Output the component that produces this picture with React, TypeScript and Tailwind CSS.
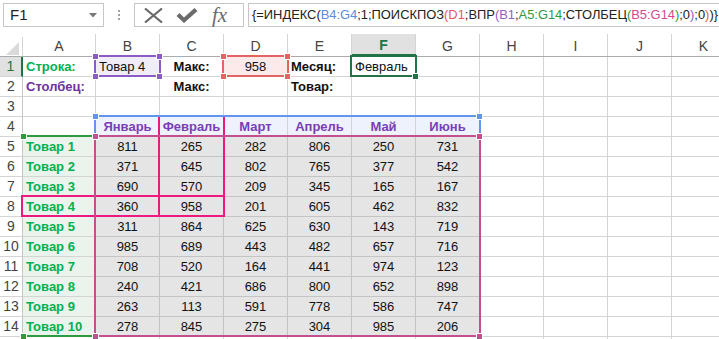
import React from "react"
import clsx from "clsx"
import { twMerge } from "tailwind-merge"

// ширины колонок листа: A, B..K
const colW = ["w-[73px]", "w-[64px]", "w-[64px]", "w-[64px]", "w-[64px]", "w-[64px]", "w-[64px]", "w-[64px]", "w-[64px]", "w-[64px]", "w-[64px]"]
const letters = ["A", "B", "C", "D", "E", "F", "G", "H", "I", "J", "K"]
const months = ["Январь", "Февраль", "Март", "Апрель", "Май", "Июнь"]

const data: [string, number[]][] = [
    ["Товар 1", [811, 265, 282, 806, 250, 731]],
    ["Товар 2", [371, 645, 802, 765, 377, 542]],
    ["Товар 3", [690, 570, 209, 345, 165, 167]],
    ["Товар 4", [360, 958, 201, 605, 462, 832]],
    ["Товар 5", [311, 864, 625, 630, 143, 719]],
    ["Товар 6", [985, 689, 443, 482, 657, 716]],
    ["Товар 7", [708, 520, 164, 441, 974, 123]],
    ["Товар 8", [240, 421, 686, 800, 652, 898]],
    ["Товар 9", [263, 113, 591, 778, 586, 747]],
    ["Товар 10", [278, 845, 275, 304, 985, 206]],
]

type CellSpec = { text?: string; cls?: string }

const Cell = ({ col, spec }: { col: number; spec?: CellSpec }) => (
    <div
        className={twMerge(
            "h-[20px] shrink-0 border-r border-b border-[#d4d4d4] flex items-center whitespace-nowrap text-[13px] text-[#111]",
            colW[col],
            spec?.cls
        )}
    >
        {spec?.text}
    </div>
)

const RowHead = ({ n, active }: { n?: number; active?: boolean }) => (
    <div
        className={clsx(
            "w-[23px] h-[20px] shrink-0 flex items-center justify-center border-b border-[#d4d4d4] text-[14px]",
            active
                ? "bg-[#e1e1e1] text-[#217346] border-r-2 border-r-[#217346]"
                : "border-r border-r-[#c6c6c6] text-[#444]"
        )}
    >
        {n}
    </div>
)

const Sq = ({ className }: { className: string }) => (
    <div className={clsx("absolute w-[7px] h-[7px] border border-white", className)} />
)

const FormulaBar = () => (
    <div className="h-[34px] flex items-start pt-[3px] bg-white">
        {/* поле имени */}
        <div className="ml-[3px] w-[101px] h-[24px] border border-[#c6c6c6] flex items-center justify-between pl-[6px] pr-[6px]">
            <span className="text-[15px] text-[#222]">F1</span>
            <svg width="8" height="5" viewBox="0 0 8 5"><path d="M0 0h8L4 4.5z" fill="#777" /></svg>
        </div>
        <div className="w-[30px] h-[24px] flex flex-col items-center justify-center gap-[2px]">
            <div className="w-[2px] h-[2px] bg-[#a0a0a0]" />
            <div className="w-[2px] h-[2px] bg-[#a0a0a0]" />
            <div className="w-[2px] h-[2px] bg-[#a0a0a0]" />
        </div>
        {/* кнопки */}
        <div className="w-[110px] h-[24px] border border-[#c6c6c6] flex items-center">
            <svg className="ml-[9px]" width="19" height="15" viewBox="0 0 19 15">
                <path d="M1 0.5 L18 14.5 M18 0.5 L1 14.5" stroke="#6b6b6b" strokeWidth="2.2" />
            </svg>
            <svg className="ml-[13px]" width="22" height="15" viewBox="0 0 22 15">
                <path d="M0.5 8 L3.5 5 L8 9.5 L18.5 0 L21.5 3 L8 15 Z" fill="#6b6b6b" />
            </svg>
            <span className="ml-[14px] text-[21px] italic text-[#6b6b6b] leading-none" style={{ fontFamily: '"Liberation Serif", serif' }}>
                fx
            </span>
        </div>
        {/* строка формул */}
        <div className="ml-[4px] flex-1 h-[24px] border border-r-0 border-[#c6c6c6] flex items-center pl-[3px] overflow-hidden whitespace-nowrap text-[12.9px] text-[#222]">
            <span>{"{=ИНДЕКС("}</span>
            <span className="text-[#5a8be0]">B4:G4</span>
            <span>;1;ПОИСКПОЗ</span>
            <span className="text-[#e05a5a]">(</span>
            <span className="text-[#e05a5a]">D1</span>
            <span>;ВПР</span>
            <span className="text-[#9060c4]">(</span>
            <span className="text-[#9060c4]">B1</span>
            <span>;</span>
            <span className="text-[#2e9a3e]">A5:G14</span>
            <span>;СТОЛБЕЦ</span>
            <span className="text-[#2e9a3e]">(</span>
            <span className="text-[#d24a8e]">B5:G14</span>
            <span className="text-[#2e9a3e]">)</span>
            <span>;0</span>
            <span className="text-[#9060c4]">)</span>
            <span>;0</span>
            <span className="text-[#e05a5a]">)</span>
            <span>{")}"}</span>
        </div>
    </div>
)

const buildRows = (): CellSpec[][] => {
    const bold = "font-bold"
    const rows: CellSpec[][] = []
    rows.push([
        { text: "Строка:", cls: `${bold} text-[#00b050] pl-[3px]` },
        { text: "Товар 4", cls: "bg-[#f0ecf8] pl-[3px]" },
        { text: "Макс:", cls: `${bold} justify-center` },
        { text: "958", cls: "bg-[#fce9e9] justify-center" },
        { text: "Месяц:", cls: `${bold} pl-[3px]` },
        { text: "Февраль", cls: "pl-[3px]" },
    ])
    rows.push([
        { text: "Столбец:", cls: `${bold} text-[#7030a0] pl-[3px]` },
        {},
        { text: "Макс:", cls: `${bold} justify-center` },
        {},
        { text: "Товар:", cls: `${bold} pl-[3px]` },
    ])
    rows.push([])
    rows.push([
        {},
        ...months.map((m) => ({ text: m, cls: `${bold} text-[#7a3db8] justify-center bg-[#edf2fc]` })),
    ])
    data.forEach(([name, vals]) => {
        rows.push([
            { text: name, cls: `${bold} text-[#00b050] pl-[3px] bg-[#eaf4ec]` },
            ...vals.map((v) => ({ text: String(v), cls: "justify-center bg-[#e6e5e5] border-[#c4c4c4]" })),
        ])
    })
    return rows
}

const Sheet = () => {
    const rows = buildRows()
    return (
        <div className="relative">
            {/* заголовки колонок */}
            <div className="flex h-[23px] border-b border-[#ababab]">
                <div className="w-[23px] shrink-0 relative border-r border-[#d4d4d4] mt-[3px]">
                    <svg className="absolute left-[6px] top-[5px]" width="13" height="13" viewBox="0 0 13 13">
                        <path d="M13 0V13H0Z" fill="#dadada" />
                    </svg>
                </div>
                {letters.map((l, i) => (
                    <div
                        key={l}
                        className={clsx(
                            "shrink-0 flex items-center justify-center text-[14px]",
                            colW[i],
                            i === 5
                                ? "bg-[#e1e1e1] text-[#217346] font-bold border-b-2 border-[#217346]"
                                : "text-[#444]"
                        )}
                    >
                        <div className="flex-1 h-full flex items-center justify-center pt-[2px] border-r border-[#d4d4d4]">{l}</div>
                    </div>
                ))}
            </div>
            {rows.map((r, ri) => (
                <div key={ri} className="flex">
                    <RowHead n={ri + 1} active={ri === 0} />
                    {letters.map((l, ci) => (
                        <Cell key={l} col={ci} spec={r[ci]} />
                    ))}
                </div>
            ))}
            {/* строка 15, видна лишь кромка */}
            <div className="flex">
                <RowHead />
                {letters.map((l, ci) => (
                    <Cell key={l} col={ci} />
                ))}
            </div>

            {/* условное форматирование: C4:C8 и A8:C8 */}
            <div className="absolute left-[158px] top-[81px] w-[67px] h-[102px] border-2 border-[#ec1a7e]" />
            <div className="absolute left-[21px] top-[161px] w-[204px] h-[22px] border-2 border-[#ec1a7e]" />

            {/* A5:G14 зелёный */}
            <div className="absolute left-[22px] top-[101px] w-[74px] h-[2px] bg-[#2e9a3e]" />
            <div className="absolute left-[22px] top-[301px] w-[74px] h-[2px] bg-[#2e9a3e]" />
            <Sq className="left-[20px] top-[99px] bg-[#2e9a3e]" />
            <Sq className="left-[20px] top-[299px] bg-[#2e9a3e]" />

            {/* B4:G4 синий */}
            <div className="absolute left-[94px] top-[81px] w-[387px] h-[22px] border-2 border-[#6495ed]" />
            <Sq className="left-[92px] top-[79px] bg-[#6495ed]" />
            <Sq className="left-[476px] top-[79px] bg-[#6495ed]" />

            {/* B5:G14 малиновый */}
            <div className="absolute left-[94px] top-[101px] w-[387px] h-[202px] border-2 border-[#c2508f]" />
            <Sq className="left-[92px] top-[99px] bg-[#c2508f]" />
            <Sq className="left-[476px] top-[99px] bg-[#c2508f]" />
            <Sq className="left-[92px] top-[299px] bg-[#c2508f]" />
            <Sq className="left-[476px] top-[299px] bg-[#c2508f]" />

            {/* B1 фиолетовый */}
            <div className="absolute left-[94px] top-[21px] w-[67px] h-[22px] border-2 border-[#8b5cc4]" />
            <Sq className="left-[92px] top-[19px] bg-[#8b5cc4]" />
            <Sq className="left-[156px] top-[19px] bg-[#8b5cc4]" />
            <Sq className="left-[92px] top-[39px] bg-[#8b5cc4]" />
            <Sq className="left-[156px] top-[39px] bg-[#8b5cc4]" />

            {/* D1 красный */}
            <div className="absolute left-[222px] top-[21px] w-[67px] h-[22px] border-2 border-[#e46464]" />
            <Sq className="left-[220px] top-[19px] bg-[#e46464]" />
            <Sq className="left-[284px] top-[19px] bg-[#e46464]" />
            <Sq className="left-[220px] top-[39px] bg-[#e46464]" />
            <Sq className="left-[284px] top-[39px] bg-[#e46464]" />

            {/* выделение F1 */}
            <div className="absolute left-[350px] top-[21px] w-[67px] h-[22px] border-2 border-[#217346]" />
            <Sq className="left-[412px] top-[39px] bg-[#217346]" />
        </div>
    )
}

export default function App() {
    return (
        <div className="w-[719px] h-[339px] overflow-hidden bg-white" style={{ fontFamily: '"Liberation Sans", Arial, sans-serif' }}>
            <FormulaBar />
            <Sheet />
        </div>
    )
}
